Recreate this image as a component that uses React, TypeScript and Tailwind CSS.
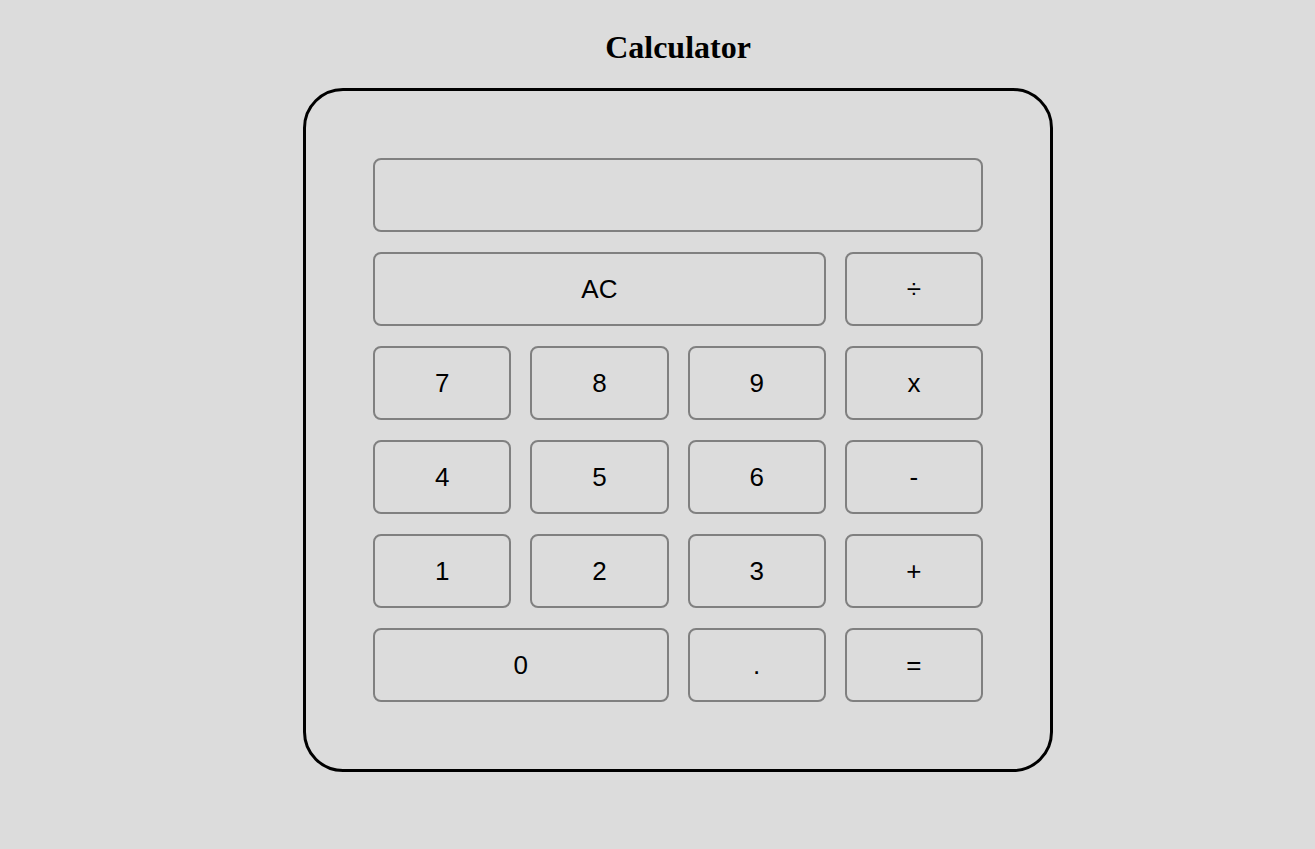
const keys: { label: string; span?: string }[] = [
  { label: "AC", span: "col-span-3" },
  { label: "÷" },
  { label: "7" },
  { label: "8" },
  { label: "9" },
  { label: "x" },
  { label: "4" },
  { label: "5" },
  { label: "6" },
  { label: "-" },
  { label: "1" },
  { label: "2" },
  { label: "3" },
  { label: "+" },
  { label: "0", span: "col-span-2" },
  { label: "." },
  { label: "=" },
];

export default function App() {
  return (
    <div className="min-h-[849px] bg-[#dcdcdc] pt-[30px] pl-[41px] flex flex-col items-center">
      <h1 className="text-[32px] leading-[35px] font-bold text-black font-['Liberation_Serif',serif]">
        Calculator
      </h1>

      {/* Calculator body */}
      <div className="mt-[23px] w-[750px] border-[3px] border-black rounded-[40px] p-[67px]">
        <div className="grid grid-cols-4 gap-x-[19px] gap-y-[20px] font-['Liberation_Sans',Arial,sans-serif]">
          <div className="col-span-4 h-[74px] border-2 border-[#808080] rounded-lg" />
          {keys.map((k) => (
            <button
              key={k.label}
              className={`${k.span ?? ""} h-[74px] border-2 border-[#808080] rounded-lg bg-transparent text-[26px] text-black flex items-center justify-center`}
            >
              {k.label}
            </button>
          ))}
        </div>
      </div>
    </div>
  );
}
